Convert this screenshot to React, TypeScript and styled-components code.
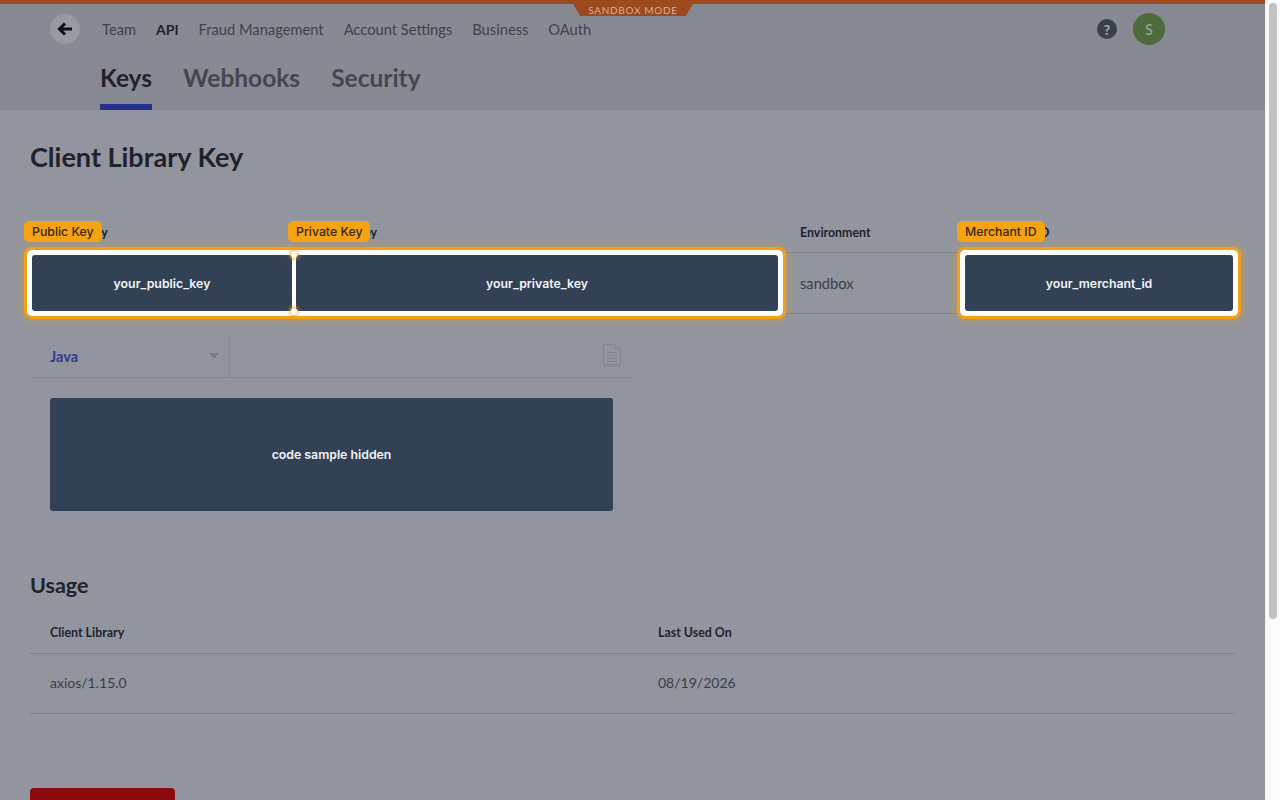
import React from "react";
import styled, { createGlobalStyle } from "styled-components";

const Global = createGlobalStyle`
  html, body { margin: 0; height: 100%; overflow: hidden; }
  body { font-family: "Lato", "Open Sans", sans-serif; color: #1f232c; background: #92959e; }
  * { box-sizing: border-box; }
`;

const Shell = styled.div`
  display: flex;
  height: 100vh;
  overflow: hidden;
`;
const Page = styled.div`
  flex: 1;
  min-width: 0;
  height: 100%;
  overflow: hidden;
  position: relative;
  background: #92959e;
`;
const ScrollTrack = styled.div`
  width: 15px;
  height: 100%;
  background: #fbfbfb;
  border-left: 1px solid #f0f0f0;
  padding: 3px 3px 0 3px;
`;
const ScrollThumb = styled.div`
  width: 8px;
  height: 616px;
  background: #c2c2c2;
  border-radius: 4px;
`;
const TopStripe = styled.div`
  height: 4px;
  background: #9c4a1e;
`;
const SandboxTab = styled.div`
  position: absolute;
  top: 4px;
  left: 573px;
  width: 120px;
  height: 12px;
  background: #9c4a1e;
  clip-path: polygon(0 0, 100% 0, 94% 100%, 6% 100%);
  color: #d2b09c;
  font-size: 10px;
  letter-spacing: 0.7px;
  line-height: 12px;
  text-align: center;
`;
const Header = styled.header`
  background: #888a93;
  height: 106px;
  border-bottom: 1px solid #82858d;
`;
const TopNav = styled.div`
  height: 50px;
  display: flex;
  align-items: center;
  padding: 0 100px 0 50px;
`;
const BackButton = styled.div`
  width: 30px;
  height: 30px;
  border-radius: 50%;
  background: #989aa3;
  display: flex;
  align-items: center;
  justify-content: center;
  margin-right: 22px;
`;
const NavLink = styled.a<{ $active?: boolean }>`
  font-size: ${(p) => (p.$active ? "14px" : "14.7px")};
  margin-right: 20px;
  color: ${(p) => (p.$active ? "#1e222b" : "#3e424d")};
  font-weight: ${(p) => (p.$active ? 700 : 400)};
`;
const Spacer = styled.div`
  flex: 1;
`;
const Help = styled.div`
  width: 20px;
  height: 20px;
  border-radius: 50%;
  background: #3a3f4c;
  color: #a4a6ad;
  font-size: 14px;
  font-weight: 900;
  display: flex;
  align-items: center;
  justify-content: center;
  margin-right: 16px;
`;
const Avatar = styled.div`
  width: 32px;
  height: 32px;
  border-radius: 50%;
  background: #4f6a3c;
  color: #9aae8e;
  font-size: 14.5px;
  display: flex;
  align-items: center;
  justify-content: center;
`;
const Tabs = styled.div`
  display: flex;
  gap: 31px;
  padding-left: 100px;
  height: 56px;
`;
const Tab = styled.a<{ $active?: boolean }>`
  font-size: 24.5px;
  font-weight: 700;
  line-height: 48px;
  height: 56px;
  color: ${(p) => (p.$active ? "#1f232c" : "#43474f")};
  border-bottom: ${(p) => (p.$active ? "6px solid #27318f" : "none")};
`;
const Main = styled.main`
  padding: 30px 30px 0;
`;
const Title = styled.h1`
  margin: 0;
  font-size: 27px;
  line-height: 34px;
  font-weight: 700;
  color: #1f232c;
`;
const KeyTable = styled.div`
  margin-top: 42px;
  display: grid;
  grid-template-columns: 264px 486px 180px 275px;
  grid-template-rows: 37px 61px;
`;
const HeadCell = styled.div`
  font-size: 12.4px;
  font-weight: 700;
  color: #1f232c;
  display: flex;
  align-items: center;
  padding: 0 0 3px 20px;
  border-bottom: 1px solid #7e8088;
  position: relative;
`;
const ValueCell = styled.div`
  font-size: 14.7px;
  color: #3a3e48;
  display: flex;
  align-items: center;
  padding: 0 0 1px 20px;
  border-bottom: 1px solid #7e8088;
  position: relative;
`;
const Highlight = styled.div<{ $left?: number }>`
  position: absolute;
  top: -3px;
  bottom: -3px;
  left: ${(p) => p.$left ?? -3}px;
  right: -3px;
  padding: 5px;

  &::before {
    content: "";
    position: absolute;
    inset: 0;
    border-radius: 5px;
    box-shadow: 0 0 0 3px #f2a116, 0 0 9px 5px rgba(245, 163, 18, 0.32);
    z-index: 1;
  }
  &::after {
    content: "";
    position: absolute;
    inset: 0;
    border-radius: 5px;
    background: #fff;
    z-index: 2;
  }
`;
const Mask = styled.div`
  position: relative;
  z-index: 3;
  height: 100%;
  background: #334155;
  border-radius: 3px;
  color: #f1f5f9;
  font-family: "Inter", sans-serif;
  font-size: 12.3px;
  font-weight: 600;
  display: flex;
  align-items: center;
  justify-content: center;
`;
const Badge = styled.div`
  position: absolute;
  left: -6px;
  top: 5px;
  height: 21px;
  padding: 0 8px;
  border-radius: 5px;
  background: #f5a312;
  color: #3a2606;
  font-family: "Inter", sans-serif;
  font-size: 12.3px;
  font-weight: 500;
  line-height: 21px;
  white-space: nowrap;
  z-index: 4;
`;
const MerchantBadge = styled(Badge)`
  left: -3px;
`;
const Dot = styled.div<{ $top: number }>`
  position: absolute;
  left: 261px;
  top: ${(p) => p.$top}px;
  width: 6px;
  height: 7px;
  border-radius: 50%;
  background: #fff;
  box-shadow: 0 0 4px 1px #f5a312;
  z-index: 5;
`;
const Toolbar = styled.div`
  width: 604px;
  height: 44px;
  margin-top: 20px;
  display: flex;
  border-bottom: 1px solid #878a93;
`;
const LangSelect = styled.div`
  width: 200px;
  border-right: 1px solid #878a93;
  display: flex;
  align-items: center;
  justify-content: space-between;
  padding: 1px 10px 0 20px;
  font-size: 14.5px;
  font-weight: 700;
  color: #2f3a8f;
`;
const Caret = styled.div`
  width: 0;
  height: 0;
  border-left: 5px solid transparent;
  border-right: 5px solid transparent;
  border-top: 6px solid #7a7c85;
`;
const CopyZone = styled.div`
  flex: 1;
  display: flex;
  align-items: center;
  justify-content: flex-end;
  padding: 0 12px 2px 0;
`;
const CodeBlock = styled.div`
  width: 563px;
  height: 113px;
  margin: 20px 0 0 20px;
  background: #334155;
  border-radius: 3px;
  color: #f1f5f9;
  font-family: "Inter", sans-serif;
  font-size: 12.3px;
  font-weight: 600;
  display: flex;
  align-items: center;
  justify-content: center;
`;
const SubTitle = styled.h2`
  margin: 61px 0 0;
  font-size: 21.5px;
  line-height: 26px;
  font-weight: 700;
  color: #1f232c;
`;
const UsageTable = styled.div`
  margin-top: 16px;
  display: grid;
  grid-template-columns: 608px 1fr;
  grid-template-rows: 40px 60px;
`;
const UsageHead = styled.div`
  font-size: 12.4px;
  font-weight: 700;
  color: #1f232c;
  display: flex;
  align-items: center;
  padding: 0 0 2px 20px;
  border-bottom: 1px solid #7e8088;
`;
const UsageCell = styled.div`
  font-size: 14px;
  color: #3a3e48;
  display: flex;
  align-items: center;
  padding: 0 0 2px 20px;
  border-bottom: 1px solid #7e8088;
`;
const DangerButton = styled.div`
  width: 145px;
  height: 44px;
  margin-top: 74px;
  background: #8b0a10;
  border-radius: 4px;
`;

export default function App() {
  return (
    <Shell>
      <Global />
      <Page>
        <TopStripe />
        <SandboxTab>SANDBOX MODE</SandboxTab>
        <Header>
          <TopNav>
            <BackButton>
              <svg width="16" height="16" viewBox="0 0 16 16" fill="none" stroke="#0f1218" strokeWidth="3">
                <path d="M15 8H3M8 2.5 2.5 8 8 13.5" />
              </svg>
            </BackButton>
            <NavLink>Team</NavLink>
            <NavLink $active>API</NavLink>
            <NavLink>Fraud Management</NavLink>
            <NavLink>Account Settings</NavLink>
            <NavLink>Business</NavLink>
            <NavLink>OAuth</NavLink>
            <Spacer />
            <Help>?</Help>
            <Avatar>S</Avatar>
          </TopNav>
          <Tabs>
            <Tab $active>Keys</Tab>
            <Tab>Webhooks</Tab>
            <Tab>Security</Tab>
          </Tabs>
        </Header>
        <Main>
          <Title>Client Library Key</Title>
          <KeyTable>
            <HeadCell>
              Public Key
              <Badge>Public Key</Badge>
            </HeadCell>
            <HeadCell>
              Private Key
              <Badge>Private Key</Badge>
            </HeadCell>
            <HeadCell>Environment</HeadCell>
            <HeadCell>
              Merchant ID
              <MerchantBadge>Merchant ID</MerchantBadge>
            </HeadCell>
            <ValueCell>
              <Highlight>
                <Mask>your_public_key</Mask>
              </Highlight>
              <Dot $top={-2} />
              <Dot $top={55} />
            </ValueCell>
            <ValueCell>
              <Highlight>
                <Mask>your_private_key</Mask>
              </Highlight>
            </ValueCell>
            <ValueCell>sandbox</ValueCell>
            <ValueCell>
              <Highlight $left={0}>
                <Mask>your_merchant_id</Mask>
              </Highlight>
            </ValueCell>
          </KeyTable>
          <Toolbar>
            <LangSelect>
              Java
              <Caret />
            </LangSelect>
            <CopyZone>
              <svg width="20" height="24" viewBox="0 0 20 24" fill="none" stroke="#83868e" strokeWidth="1">
                <path d="M1.5 1.5h12l5 4.5v15.5h-17zM13.5 1.5V6h5M5 9.5h10M5 12.5h10M5 15.5h10M5 18.5h10M1.5 23h17" />
              </svg>
            </CopyZone>
          </Toolbar>
          <CodeBlock>code sample hidden</CodeBlock>
          <SubTitle>Usage</SubTitle>
          <UsageTable>
            <UsageHead>Client Library</UsageHead>
            <UsageHead>Last Used On</UsageHead>
            <UsageCell>axios/1.15.0</UsageCell>
            <UsageCell>08/19/2026</UsageCell>
          </UsageTable>
          <DangerButton />
        </Main>
      </Page>
      <ScrollTrack>
        <ScrollThumb />
      </ScrollTrack>
    </Shell>
  );
}
